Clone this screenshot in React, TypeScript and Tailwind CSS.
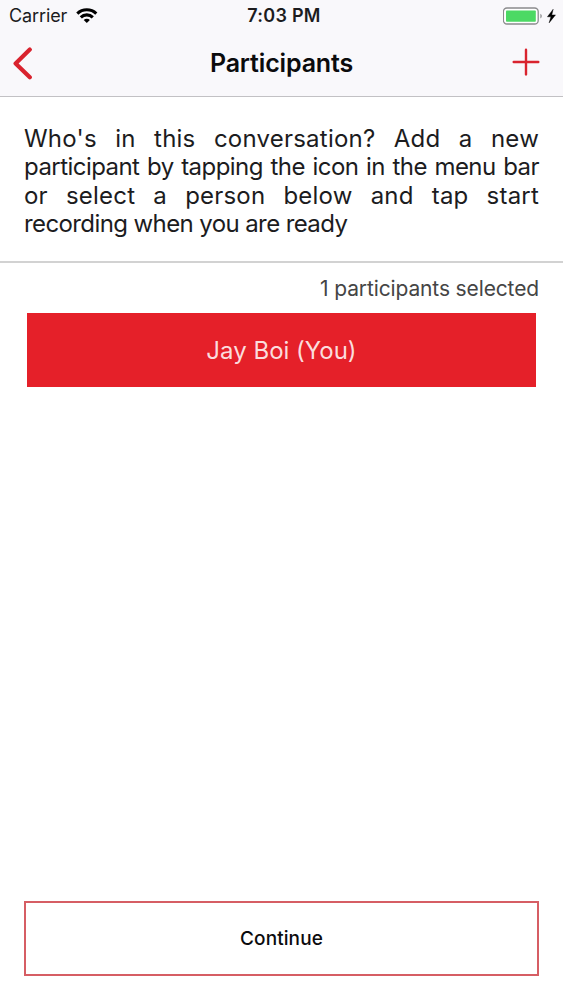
const introLines = [
  { text: "Who's in this conversation? Add a new", style: 'tracking-[0.22px] [text-align-last:justify]' },
  { text: 'participant by tapping the icon in the menu bar', style: 'tracking-[-0.55px] [text-align-last:justify]' },
  { text: 'or select a person below and tap start', style: 'tracking-[0.2px] [text-align-last:justify]' },
  { text: 'recording when you are ready', style: 'tracking-[-0.6px]' },
];

function StatusBar() {
  return (
    <div className="h-[31px] flex items-center justify-between pl-[9px] pr-[6px] text-[18px] text-[#1c1c1e]">
      <div className="flex-1 flex items-center gap-[9px]">
        <span className="leading-none tracking-[-0.1px]">Carrier</span>
        <svg width="22" height="16" viewBox="0 0 22 16" fill="none" stroke="#000" strokeWidth="3.1">
          <path d="M1.3 5.6a13.8 13.8 0 0 1 19 0" />
          <path d="M4.8 9.3a8.6 8.6 0 0 1 12 0" />
          <path d="M10.8 15 7.7 12a4.3 4.3 0 0 1 6.2 0Z" fill="#000" stroke="none" />
        </svg>
      </div>
      <span className="pl-0.5 leading-none font-semibold tracking-[0.25px]">7:03 PM</span>
      <div className="flex-1 flex items-center justify-end">
        <svg width="54" height="20" viewBox="0 0 54 20">
          <rect x="0.4" y="2" width="34.8" height="16" rx="3.6" fill="#fff" stroke="#8b8b8d" strokeWidth="1.3" />
          <rect x="3" y="4.4" width="29.8" height="11.4" rx="0.8" fill="#4cd964" />
          <path d="M37.4 7.8c1.9.8 1.9 3.8 0 4.6Z" fill="#8b8b8d" />
          <path d="M50.2 3.2 44.4 10.8h3.5l-1.8 6.1 6.4-8h-3.7Z" fill="#000" stroke="#000" strokeWidth="0.4" />
        </svg>
      </div>
    </div>
  );
}

function NavBar() {
  return (
    <div className="h-[65px] flex items-center justify-between px-3">
      <button className="w-16">
        <svg width="21" height="34" viewBox="0 0 21 34" fill="none" stroke="#d9232e" strokeWidth="4.2" strokeLinecap="round" strokeLinejoin="round">
          <path d="M17.8 2.6 3.6 16.4 17.8 30.2" />
        </svg>
      </button>
      <h1 className="text-[25px] leading-none font-semibold text-[#0b0b0d] tracking-[-0.15px]">Participants</h1>
      <button className="w-16 flex justify-end pr-[11px] pb-1">
        <svg width="28" height="28" viewBox="0 0 28 28" stroke="#d9232e" strokeWidth="2.4" strokeLinecap="round">
          <path d="M14 1.8v24.6M1.7 14h24.6" />
        </svg>
      </button>
    </div>
  );
}

export default function App() {
  return (
    <div className="w-full h-[1000px] flex flex-col bg-white font-['Inter',sans-serif]">
      <header className="h-[97px] bg-[#f9f8fb] border-b border-[#c2c1c4]">
        <StatusBar />
        <NavBar />
      </header>

      <section className="h-[166px] px-6 pt-[27.5px] border-b-2 border-[#d2d2d2]">
        {introLines.map((line) => (
          <p key={line.text} className={`text-[24px] leading-[28.5px] whitespace-nowrap text-[#1c1c1e] ${line.style}`}>
            {line.text}
          </p>
        ))}
      </section>

      <main className="flex-1 px-6">
        <p className="h-[50px] flex items-center justify-end text-[21px] leading-none text-[#454545] tracking-[-0.13px]">
          1 participants selected
        </p>
        <button className="w-[509px] h-[74px] mx-[3px] pt-0.5 flex items-center justify-center bg-[#e52029] text-[24px] text-[#fbdcdd]">
          Jay Boi (You)
        </button>
      </main>

      <footer className="px-6 pb-6">
        <button className="w-full h-[75px] pt-0.5 border-2 border-[#d65e64] text-[19px] font-medium text-[#0b0b0d] tracking-[0.1px]">
          Continue
        </button>
      </footer>
    </div>
  );
}
